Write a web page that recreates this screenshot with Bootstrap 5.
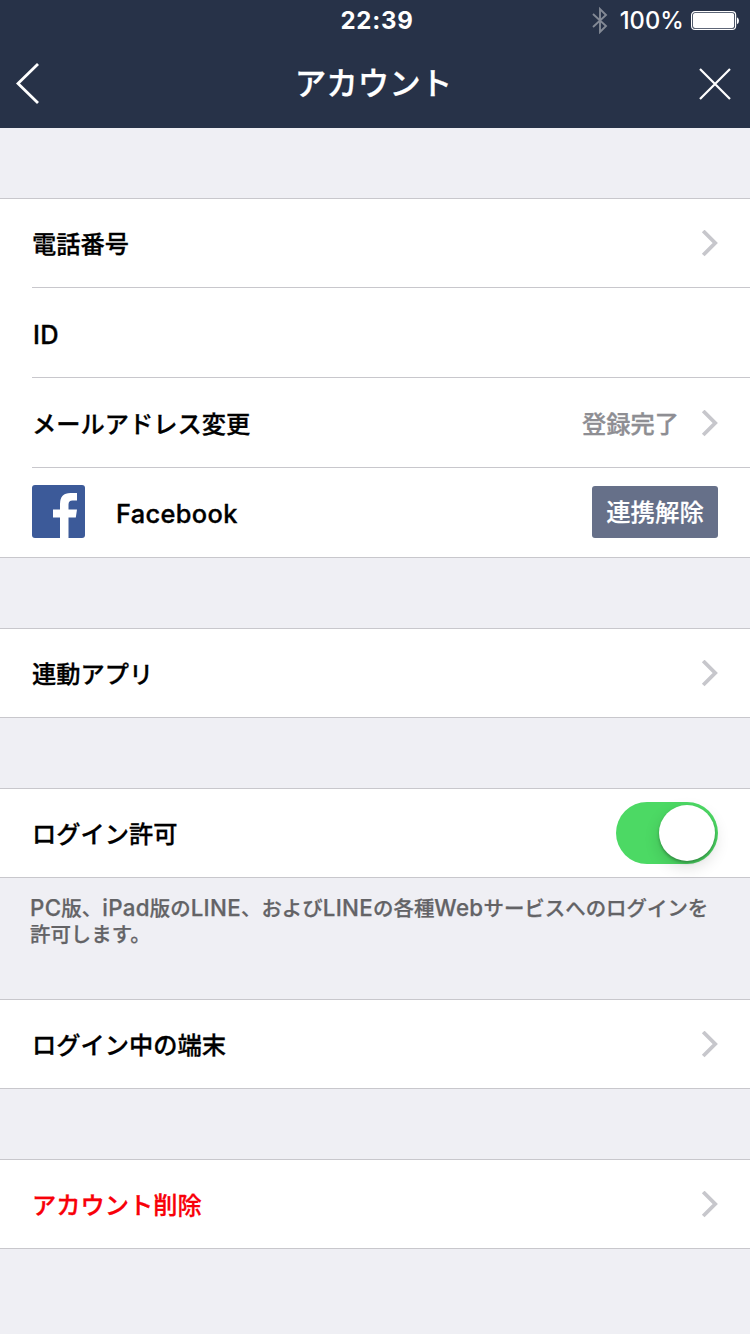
<!DOCTYPE html>
<html lang="ja">
<head>
<meta charset="utf-8">
<meta name="viewport" content="width=device-width, initial-scale=1">
<title>アカウント</title>
<link rel="stylesheet" href="https://cdn.jsdelivr.net/npm/bootstrap@5.3.0/dist/css/bootstrap.min.css">
<style>
body{background:#efeff4;color:#000;font-family:Inter,"Noto Sans CJK JP",sans-serif;font-size:24.25px;font-weight:500;line-height:36px;height:1334px;overflow:hidden}
.topbar{background:#273248;color:#fff;height:128px}
.status{height:40px;display:grid;grid-template-columns:1fr auto 1fr}
.clock{font-size:24px;font-weight:700;letter-spacing:.75px;padding:2px 0 0 4px}
.charge{font-size:23.7px;letter-spacing:.1px;padding-top:2px;margin-right:-1px}
.titlebar{height:88px;padding:0 19px 0 16px;display:grid;grid-template-columns:1fr auto 1fr}
.heading{font-size:31.5px;line-height:44px;-webkit-text-stroke:.25px currentColor}
.group{border-top:1px solid #c8c7cc;border-bottom:1px solid #c8c7cc;background:#fff;margin-top:70px;padding-left:32px}
.entry{height:88px;padding-right:32px}
.entry+.entry{height:90px;border-top:1px solid #c8c7cc;padding-top:1px}
.entry>span{padding-top:3px;-webkit-text-stroke:.3px currentColor}
.entry>.latin{font-size:25.4px;letter-spacing:.35px;-webkit-text-stroke-width:.35px;padding-left:1px}
.entry+.entry.linked{padding-top:0;padding-bottom:2px}
.entry.linked>.latin{padding-top:5px;margin-left:30px}
.entry>.state{color:#8e8e93;margin-right:22px}
.unlink,.unlink:hover{background:#667089;color:#fff;width:126px;height:52px;border:0;border-radius:3px;font-size:24.4px;font-weight:500;padding:1px 0 0;-webkit-text-stroke:.2px currentColor}
.toggle{width:102px;height:62px;border-radius:31px;background:#4cd964;padding:3px}
.knob{width:56px;height:56px;border-radius:50%;background:#fff;box-shadow:0 6px 16px rgba(0,0,0,.14),0 2px 3px rgba(0,0,0,.28)}
.note{color:#636366;font-size:20.45px;line-height:26px;height:121px;padding:18px 30px 0;white-space:nowrap;-webkit-text-stroke:.25px currentColor}
.note span{font-size:22.3px;line-height:20px;-webkit-text-stroke-width:.25px;letter-spacing:.33px}
.note+.group{margin-top:0}
.remove{color:#f80008}
</style>
</head>
<body>
<header class="topbar">
  <div class="status align-items-center">
    <span></span>
    <span class="clock">22:39</span>
    <div class="d-flex align-items-center justify-content-end pe-2 me-1">
      <svg class="me-2" width="18" height="28" viewBox="0 0 18 28" fill="none" stroke="#838995" stroke-width="1.9"><path d="M3 8 16 20 10 26V3L16 9 3 21"/></svg>
      <span class="charge ms-1">100%</span>
      <svg class="ms-2" width="47" height="20" viewBox="2 0 47 20" overflow="visible"><rect x="2.600" y="1.600" width="44" height="17.800" rx="3.500" fill="none" stroke="#fff" stroke-width="1.200"/><rect x="4" y="3" width="41.200" height="15" rx="2" fill="#fff"/><path d="M48 7.300q2 1 2 3.500T48 14.300z" fill="#fff"/></svg>
    </div>
  </div>
  <div class="titlebar align-items-center">
    <svg width="24" height="42" viewBox="0 0 24 42" fill="none" stroke="#fff" stroke-width="2.800"><path d="M22 1 2 20.500 22 40"/></svg>
    <span class="heading">アカウント</span>
    <svg class="ms-auto" width="32" height="32" viewBox="0 0 32 32" fill="none" stroke="#fff" stroke-width="2.200"><path d="m1 1 30 30M31 1 1 31"/></svg>
  </div>
</header>
<svg class="d-none"><symbol id="chevron" viewBox="0 0 17 27"><path d="M2.200 1 14.200 13 2.200 25" fill="none" stroke="#c7c7cc" stroke-width="3.800"/></symbol></svg>
<main>
  <section class="group">
    <div class="entry d-flex align-items-center"><span class="me-auto">電話番号</span><svg width="17" height="27"><use href="#chevron"/></svg></div>
    <div class="entry d-flex align-items-center"><span class="latin">ID</span></div>
    <div class="entry d-flex align-items-center"><span class="me-auto">メールアドレス変更</span><span class="state">登録完了</span><svg width="17" height="27"><use href="#chevron"/></svg></div>
    <div class="entry linked d-flex align-items-center">
      <svg width="53" height="53" viewBox="0 0 53 53"><rect width="53" height="53" rx="3" fill="#3c5a99"/><path d="M28 53V32.500h-7v-8h7v-5.500Q28 8 38.500 8H45v7.500h-4.500q-4 0-4 4v5H45l-1.200 8h-7.300V53z" fill="#fff"/></svg>
      <span class="latin me-auto">Facebook</span>
      <button class="unlink btn">連携解除</button>
    </div>
  </section>
  <section class="group"><div class="entry d-flex align-items-center"><span class="me-auto">連動アプリ</span><svg width="17" height="27"><use href="#chevron"/></svg></div></section>
  <section class="group"><div class="entry d-flex align-items-center"><span class="me-auto">ログイン許可</span><div class="toggle d-flex justify-content-end" role="switch" aria-checked="true"><div class="knob"></div></div></div></section>
  <p class="note mb-0"><span>PC</span>版、<span>iPad</span>版の<span>LINE</span>、および<span>LINE</span>の各種<span>Web</span>サービスへのログインを<br>許可します。</p>
  <section class="group"><div class="entry d-flex align-items-center"><span class="me-auto">ログイン中の端末</span><svg width="17" height="27"><use href="#chevron"/></svg></div></section>
  <section class="group"><div class="entry d-flex align-items-center"><span class="remove me-auto">アカウント削除</span><svg width="17" height="27"><use href="#chevron"/></svg></div></section>
</main>
<script src="https://cdn.jsdelivr.net/npm/bootstrap@5.3.0/dist/js/bootstrap.bundle.min.js"></script>
</body>
</html>
